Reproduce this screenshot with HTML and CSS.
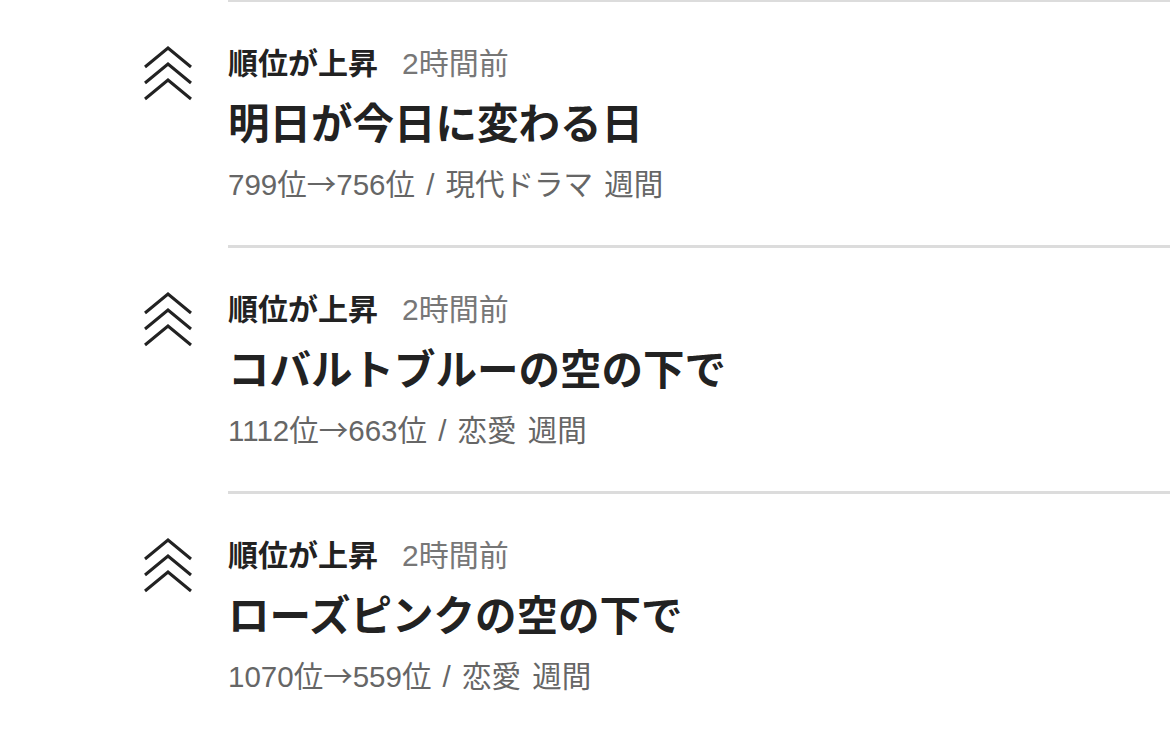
FILE: index.html
```
<!doctype html>
<html lang="ja">
<head>
  <meta charset="UTF-8">
  <title>ランキング通知</title>
  <link rel="stylesheet" href="styles.css">
</head>
<body>
  <ul class="feed">
    <li class="item">
      <div class="mark">
        <svg class="icon" width="50" height="58" viewBox="0 0 50 58">
          <path d="M2 23 L25 4 L48 23 M2 39 L25 20 L48 39 M2 55 L25 36 L48 55"/>
        </svg>
      </div>
      <div class="body">
        <p class="head"><b>順位が上昇</b><span class="time">2時間前</span></p>
        <h2 class="title">明日が今日に変わる日</h2>
        <p class="meta">799位<span class="arrow">→</span>756位 / 現代ドラマ 週間</p>
      </div>
    </li>
    <li class="item">
      <div class="mark">
        <svg class="icon" width="50" height="58" viewBox="0 0 50 58">
          <path d="M2 23 L25 4 L48 23 M2 39 L25 20 L48 39 M2 55 L25 36 L48 55"/>
        </svg>
      </div>
      <div class="body">
        <p class="head"><b>順位が上昇</b><span class="time">2時間前</span></p>
        <h2 class="title">コバルトブルーの空の下で</h2>
        <p class="meta">1112位<span class="arrow">→</span>663位 / 恋愛 週間</p>
      </div>
    </li>
    <li class="item">
      <div class="mark">
        <svg class="icon" width="50" height="58" viewBox="0 0 50 58">
          <path d="M2 23 L25 4 L48 23 M2 39 L25 20 L48 39 M2 55 L25 36 L48 55"/>
        </svg>
      </div>
      <div class="body">
        <p class="head"><b>順位が上昇</b><span class="time">2時間前</span></p>
        <h2 class="title">ローズピンクの空の下で</h2>
        <p class="meta">1070位<span class="arrow">→</span>559位 / 恋愛 週間</p>
      </div>
    </li>
  </ul>
</body>
</html>
```
FILE: styles.css
```
*{margin:0;
  padding:0;
  list-style:none;}
body{background:#fff;
     color:#222;
     font-family:"Liberation Sans","Noto Sans CJK JP",sans-serif;
     overflow:hidden;}
.feed{margin-top:-1px;}
.item{display:grid;
      grid-template-columns:228px 1fr;}
.mark{display:flex;
      justify-content:flex-end;
      padding:45px 35px 0 0;}
.icon{display:block;}
.icon path{fill:none;
           stroke:#222;
           stroke-width:3;}
.body{border-top:3px solid #dcdcdc;
      padding:44px 0 40px;}
.head{font-size:30px;
      line-height:36px;}
.head b{font-weight:bold;}
.time{color:#777;
      margin-left:24px;}
.title{font-size:41.5px;
       line-height:50px;
       font-weight:bold;
       margin-top:18px;}
.meta{font-size:29.5px;
      line-height:40px;
      color:#666;
      word-spacing:3px;
      margin-top:12px;}
.arrow{font-family:"Noto Sans CJK JP",sans-serif;}
```
